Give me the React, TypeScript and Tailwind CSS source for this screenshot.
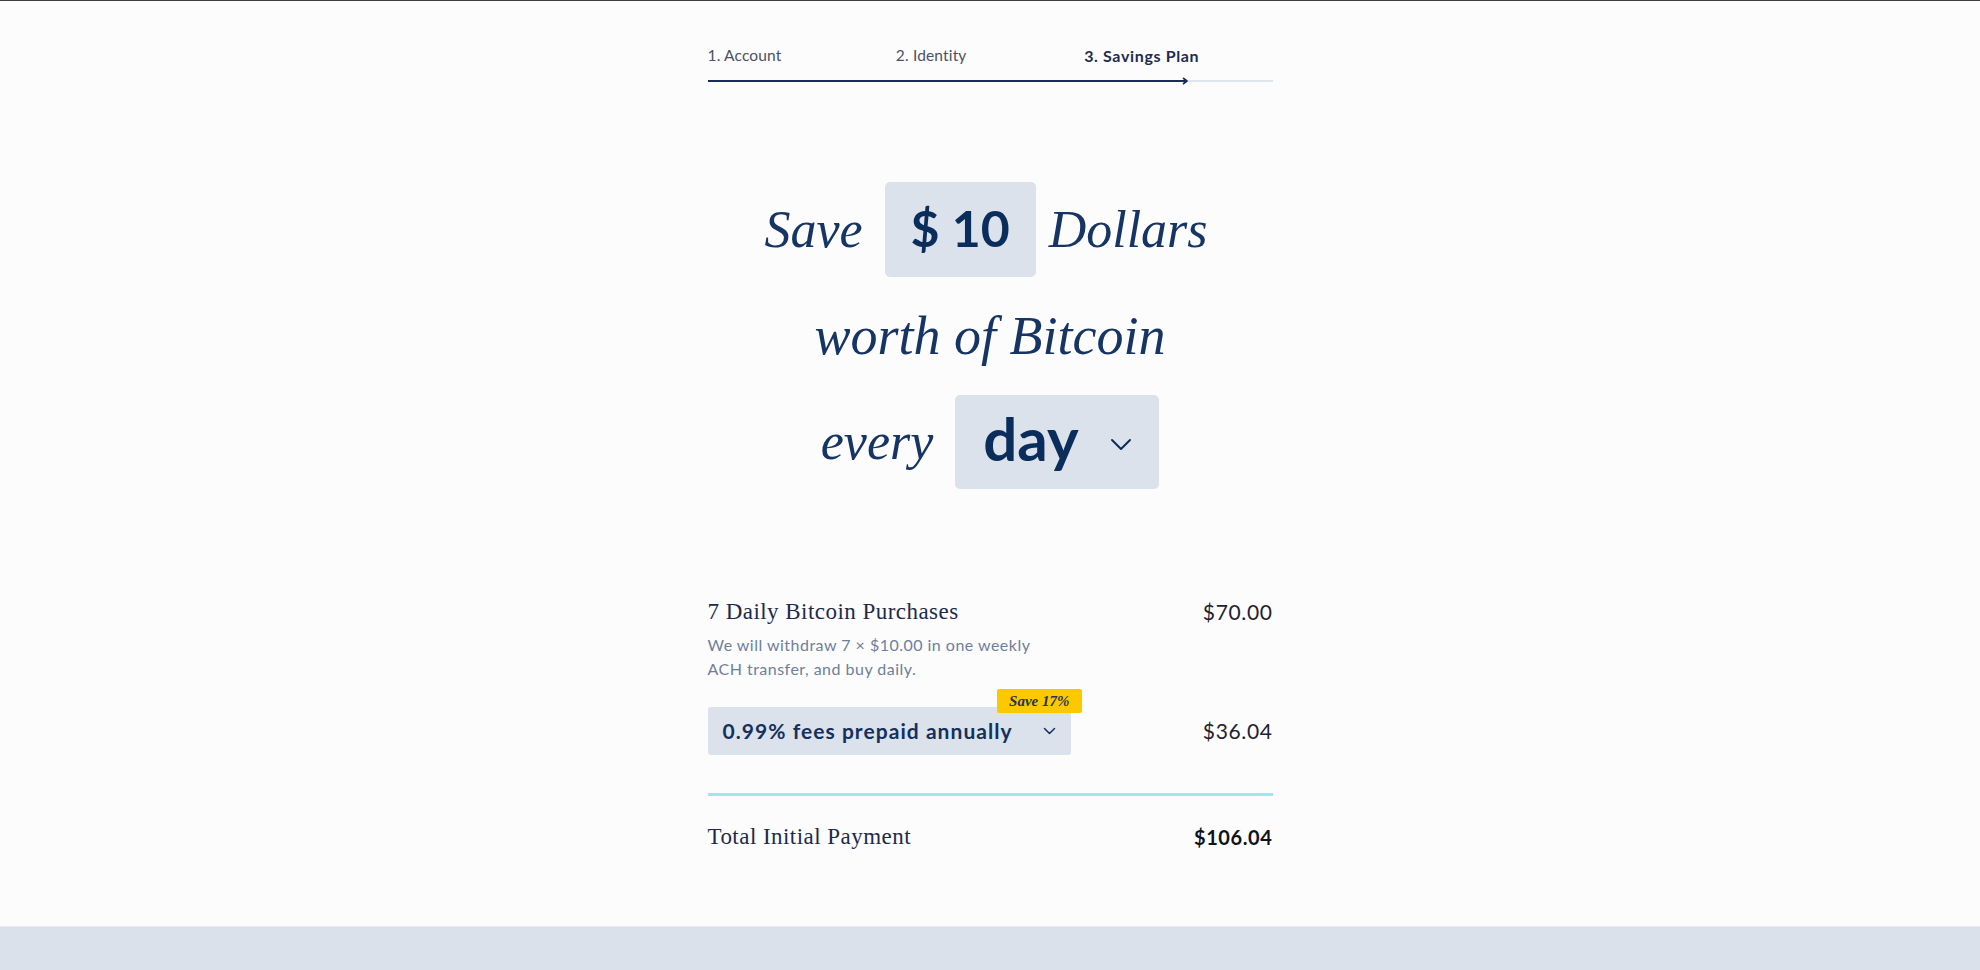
import React, { useState } from 'react';

const serif = "font-['Liberation_Serif',_'Times_New_Roman',_serif]";
const sans = "font-['Lato',_'Open_Sans',_sans-serif]";

const steps = ['1. Account', '2. Identity', '3. Savings Plan'];

const Chevron = ({ className, w, h, stroke }: { className?: string; w: number; h: number; stroke: number }) => (
  <svg width={w} height={h} viewBox={`0 0 ${w} ${h}`} className={className} fill="none">
    <polyline
      points={`${stroke},${stroke} ${w / 2},${h - stroke} ${w - stroke},${stroke}`}
      stroke="currentColor"
      strokeWidth={stroke}
      strokeLinecap="round"
      strokeLinejoin="round"
    />
  </svg>
);

const App = () => {
  const [amount] = useState(10);
  const [period] = useState('day');

  return (
    <div className={`min-h-screen flex flex-col bg-[#fcfcfc] border-t border-[#3d3d3d] ${sans}`}>
      <main className="flex-1">
        <div className="w-[565px] mx-auto pt-[44px] pb-[73px]">
          {/* Steps */}
          <div className="grid grid-cols-3">
            {steps.map((s, i) => (
              <div
                key={s}
                className={`leading-[21px] ${
                  i === 2
                    ? 'font-bold text-[16px] text-[#1d2d50] tracking-[0.04em]'
                    : 'text-[15.5px] text-[#4b5261] tracking-[0.01em]'
                }`}
              >
                {s}
              </div>
            ))}
          </div>
          <div className="mt-[11px] h-[8px] flex items-center">
            <div className="flex-1 h-[2px] bg-[#1b2a57]" />
            <svg width="6" height="8" viewBox="0 0 6 8" className="-ml-[5px] text-[#1b2a57]" fill="none">
              <polyline points="1,1 5,4 1,7" stroke="currentColor" strokeWidth="1.6" strokeLinejoin="round" />
            </svg>
            <div className="w-[85px] h-[2px] bg-[#e0e5ec]" />
          </div>

          {/* Headline */}
          <div className={`mt-[97px] flex flex-col items-center gap-[33px] text-[#173564] ${serif} italic text-[52px] leading-[52px]`}>
            <div className="flex items-center mr-[8px]">
              <span>Save</span>
              <div className={`ml-[22px] mr-[13px] w-[151px] h-[95px] rounded-[5px] bg-[#dbe2eb] flex items-center justify-center not-italic font-bold text-[50px] text-[#0b2d5b] ${sans}`}>
                <span className="-mt-[3px]">$ {amount}</span>
              </div>
              <span>Dollars</span>
            </div>
            <div className="text-[54px]">worth of Bitcoin</div>
            <div className="flex items-center gap-[22px]">
              <span>every</span>
              <div className={`w-[204px] h-[94px] rounded-[5px] bg-[#dbe2eb] flex items-center pl-[28px] pr-[27px] not-italic font-bold text-[60px] text-[#0b2d5b] ${sans}`}>
                <span className="flex-1 leading-none -mt-[8px]">{period}</span>
                <Chevron w={22} h={13} stroke={2} className="text-[#0b2d5b] mt-[4px]" />
              </div>
            </div>
          </div>

          {/* Summary */}
          <div className="mt-[109px]">
            <div className="flex justify-between items-start">
              <div>
                <div className={`${serif} text-[23px] leading-[28px] tracking-[0.02em] text-[#1c2b4a]`}>
                  7 Daily Bitcoin Purchases
                </div>
                <div className="mt-[7px] text-[16px] leading-[24px] tracking-[0.03em] text-[#6e7f9d]">
                  We will withdraw 7 × $10.00 in one weekly
                  <br />
                  ACH transfer, and buy daily.
                </div>
              </div>
              <div className="text-[21px] leading-[28px] text-[#1f2230] tracking-[0.03em]">$70.00</div>
            </div>

            <div className="mt-[26px] flex justify-between items-center">
              <div className="relative w-[363px] h-[48px] rounded-[3px] bg-[#dbe2eb] flex items-center pl-[15px] pr-[15px]">
                <span className="flex-1 font-bold text-[21px] tracking-[0.05em] text-[#15305c]">
                  0.99% fees prepaid annually
                </span>
                <Chevron w={13} h={8} stroke={1.5} className="text-[#15305c]" />
                <div className={`absolute -top-[18px] -right-[11px] h-[24px] px-[12px] flex items-center bg-[#fcc800] rounded-[2px] ${serif} italic font-bold text-[15px] text-[#2a3350]`}>
                  Save 17%
                </div>
              </div>
              <div className="text-[21px] text-[#1f2230] tracking-[0.03em]">$36.04</div>
            </div>

            <div className="mt-[38px] h-[3px] bg-[#a3e4ea]" />

            <div className="mt-[26px] flex justify-between items-center">
              <div className={`${serif} text-[23px] leading-[28px] tracking-[0.02em] text-[#1c2b4a]`}>
                Total Initial Payment
              </div>
              <div className="font-bold text-[20px] text-[#111318] tracking-[0.03em]">$106.04</div>
            </div>
          </div>
        </div>
      </main>
      <footer className="h-[44px] bg-[#dbe1ea] border-t border-[#e8ecf1]" />
    </div>
  );
};

export default App;
